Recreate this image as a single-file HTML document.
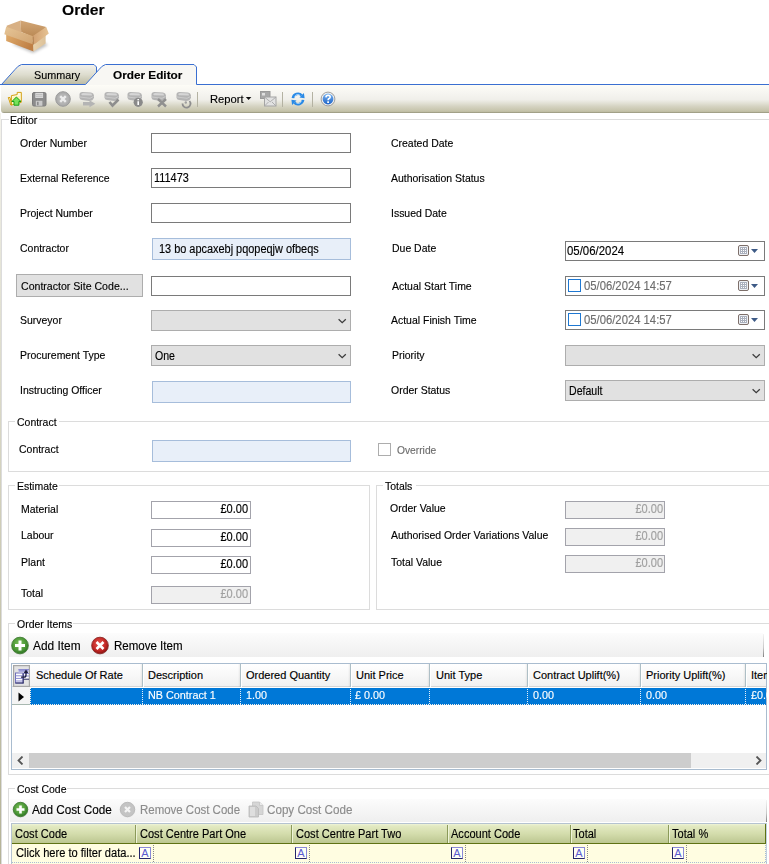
<!DOCTYPE html><html><head><meta charset="utf-8"><style>
html,body{margin:0;padding:0;width:769px;height:864px;overflow:hidden;background:#fff;position:relative}
.t{position:absolute;white-space:nowrap;font-family:'Liberation Sans',sans-serif;font-size:11px;line-height:13px;-webkit-text-stroke:0.15px currentColor}
.b{position:absolute;box-sizing:border-box}
svg{display:block}
</style></head><body>
<svg class="b" style="left:0;top:16px" width="56" height="42" viewBox="0 16 56 42">
<defs>
<linearGradient id="bi" x1="0" y1="0" x2="0" y2="1"><stop offset="0" stop-color="#d2a676"/><stop offset="1" stop-color="#b88752"/></linearGradient>
<linearGradient id="bf" x1="0" y1="0" x2="1" y2="1"><stop offset="0" stop-color="#e6c597"/><stop offset="1" stop-color="#d0a370"/></linearGradient>
<linearGradient id="bp" x1="0" y1="0" x2="1" y2="0.5"><stop offset="0" stop-color="#e0ac6c"/><stop offset="1" stop-color="#bf7f45"/></linearGradient>
<linearGradient id="br" x1="0" y1="0" x2="1" y2="0"><stop offset="0" stop-color="#e9d2ac"/><stop offset="1" stop-color="#dcc199"/></linearGradient>
<linearGradient id="bq" x1="0" y1="0" x2="1" y2="0"><stop offset="0" stop-color="#d2a070"/><stop offset="1" stop-color="#e6c394"/></linearGradient>
<filter id="bl" x="-0.5" y="-0.5" width="2" height="2"><feGaussianBlur stdDeviation="1.6"/></filter>
</defs>
<path d="M12,44 L33,53 L48,45 L40,40 Z" fill="#000" opacity="0.25" filter="url(#bl)"/>
<polygon points="6.6,25.8 20.5,20.6 21.2,32 8,33" fill="#d8b084"/>
<polygon points="20.5,20.6 46.2,27.1 35,38 21.2,32" fill="url(#bi)"/>
<polygon points="6.2,33 33.4,42 33.6,51.5 6.2,41.1" fill="url(#bp)"/>
<polygon points="33,42 45.6,34 45.6,43.4 33.5,51.5" fill="url(#br)"/>
<polygon points="4.3,34.3 6.2,26.8 33.2,36.2 32.6,44.3" fill="url(#bf)"/>
<polygon points="32.8,36 46.2,27.1 48.8,33.6 35.5,43.4 33,44.5" fill="url(#bq)"/><path d="M33.2,36.5 L33.4,44.5" stroke="#a87a4a" stroke-width="0.8"/>
</svg>
<div class="t" style="left:62px;top:3px;font-size:15px;color:#000;font-weight:bold;transform:scaleX(1.04);transform-origin:0 0;">Order</div>
<svg class="b" style="left:0;top:60px" width="769" height="26" viewBox="0 60 769 26">
<defs>
<linearGradient id="tg" x1="0" y1="0" x2="0" y2="1"><stop offset="0" stop-color="#f3f2ed"/><stop offset="0.5" stop-color="#deddcf"/><stop offset="1" stop-color="#bdbba3"/></linearGradient>
</defs>
<path d="M1.5,84.5 L15,69.5 Q18,65.5 21.5,64.5 L94,64.5 L96.5,67 L96.5,73 L85.5,84.5 Z" fill="url(#tg)"/>
<path d="M1.5,84.5 L15,69.5 Q18,65.5 21.5,64.5 L94,64.5 L96.5,67 L96.5,74" fill="none" stroke="#3a6fd1" stroke-width="1"/>
<path d="M85.5,84.5 L99,69.5 Q102,65.5 105.5,64.5 L194,64.5 L196.5,67 L196.5,85 L85.5,85 Z" fill="#f8f7f3"/>
<path d="M85.5,84.5 L99,69.5 Q102,65.5 105.5,64.5 L194,64.5 L196.5,67 L196.5,84.5 L769,84.5" fill="none" stroke="#3a6fd1" stroke-width="1"/>
<path d="M0,84.5 L85.5,84.5" fill="none" stroke="#3a6fd1" stroke-width="1"/>
</svg>
<div class="t" style="left:33.5px;top:69px;font-size:11.5px;color:#000;font-weight:normal;transform:scaleX(0.9388);transform-origin:0 0;">Summary</div>
<div class="t" style="left:113px;top:69px;font-size:11px;color:#000;font-weight:bold;transform:scaleX(1.07);transform-origin:0 0;">Order Editor</div>
<div class="b" style="left:1px;top:85px;width:768px;height:28px;background:linear-gradient(#fdfcf6 0%,#f7f6f2 25%,#f0efea 52%,#e2e1d5 65%,#d5d3c2 76%,#c8c6ae 90%,#bebca2 96%,#8b8a72 100%);border-bottom-left-radius:3px"></div>
<div class="b" style="left:0px;top:113px;width:1px;height:751px;background:linear-gradient(#f4f3ec,#e4e3d6 22%,#cfcdb8 55%,#b5b397);"></div>
<div class="b" style="left:1px;top:119px;width:800px;height:800px;border-left:1px solid #dcdcdc;border-top:1px solid #dcdcdc;"></div>
<div class="b" style="left:9px;top:119px;width:30px;height:1px;background:#fff;"></div>
<div class="t" style="left:10px;top:114px;font-size:11.5px;color:#000;font-weight:normal;transform:scaleX(0.9101);transform-origin:0 0;">Editor</div>
<div class="t" style="left:20px;top:137px;font-size:11.5px;color:#000;font-weight:normal;transform:scaleX(0.9101);transform-origin:0 0;">Order Number</div>
<div class="t" style="left:20px;top:172px;font-size:11.5px;color:#000;font-weight:normal;transform:scaleX(0.9101);transform-origin:0 0;">External Reference</div>
<div class="t" style="left:20px;top:207px;font-size:11.5px;color:#000;font-weight:normal;transform:scaleX(0.9101);transform-origin:0 0;">Project Number</div>
<div class="t" style="left:20px;top:242px;font-size:11.5px;color:#000;font-weight:normal;transform:scaleX(0.9101);transform-origin:0 0;">Contractor</div>
<div class="t" style="left:20px;top:314px;font-size:11.5px;color:#000;font-weight:normal;transform:scaleX(0.9101);transform-origin:0 0;">Surveyor</div>
<div class="t" style="left:20px;top:349px;font-size:11.5px;color:#000;font-weight:normal;transform:scaleX(0.9101);transform-origin:0 0;">Procurement Type</div>
<div class="t" style="left:20px;top:384px;font-size:11.5px;color:#000;font-weight:normal;transform:scaleX(0.9101);transform-origin:0 0;">Instructing Officer</div>
<div class="t" style="left:391px;top:137px;font-size:11.5px;color:#000;font-weight:normal;transform:scaleX(0.9101);transform-origin:0 0;">Created Date</div>
<div class="t" style="left:391px;top:172px;font-size:11.5px;color:#000;font-weight:normal;transform:scaleX(0.9101);transform-origin:0 0;">Authorisation Status</div>
<div class="t" style="left:391px;top:207px;font-size:11.5px;color:#000;font-weight:normal;transform:scaleX(0.9101);transform-origin:0 0;">Issued Date</div>
<div class="t" style="left:392px;top:242px;font-size:11.5px;color:#000;font-weight:normal;transform:scaleX(0.9101);transform-origin:0 0;">Due Date</div>
<div class="t" style="left:392px;top:280px;font-size:11.5px;color:#000;font-weight:normal;transform:scaleX(0.9101);transform-origin:0 0;">Actual Start Time</div>
<div class="t" style="left:391px;top:314px;font-size:11.5px;color:#000;font-weight:normal;transform:scaleX(0.9101);transform-origin:0 0;">Actual Finish Time</div>
<div class="t" style="left:392px;top:349px;font-size:11.5px;color:#000;font-weight:normal;transform:scaleX(0.9101);transform-origin:0 0;">Priority</div>
<div class="t" style="left:391px;top:384px;font-size:11.5px;color:#000;font-weight:normal;transform:scaleX(0.9101);transform-origin:0 0;">Order Status</div>
<div class="b" style="left:151px;top:133px;width:200px;height:20px;background:#fff;border:1px solid #7a7a7a;"></div>
<div class="b" style="left:151px;top:168px;width:200px;height:20px;background:#fff;border:1px solid #7a7a7a;"></div>
<div class="t" style="left:154.3px;top:172px;font-size:12px;color:#000;font-weight:normal;transform:scaleX(0.91);transform-origin:0 0;">111473</div>
<div class="b" style="left:151px;top:203px;width:200px;height:20px;background:#fff;border:1px solid #7a7a7a;"></div>
<div class="b" style="left:152px;top:238px;width:199px;height:22px;background:#e8eff9;border:1px solid #a6bddb;"></div>
<div class="t" style="left:158.5px;top:243px;font-size:12px;color:#000;font-weight:normal;transform:scaleX(0.91);transform-origin:0 0;">13 bo apcaxebj pqopeqjw ofbeqs</div>
<div class="b" style="left:16px;top:274px;width:127px;height:23px;background:#e1e1e1;border:1px solid #adadad;"></div>
<div class="t" style="left:21px;top:280px;font-size:11.5px;color:#000;font-weight:normal;transform:scaleX(0.9197);transform-origin:0 0;">Contractor Site Code...</div>
<div class="b" style="left:151px;top:276px;width:200px;height:20px;background:#fff;border:1px solid #7a7a7a;"></div>
<div class="b" style="left:151px;top:310px;width:200px;height:21px;background:#e1e1e1;border:1px solid #adadad;"></div>
<div class="b" style="left:338px;top:318px;width:9px;height:6px"><svg width="9" height="6" viewBox="0 0 9 6"><path d="M0.6 1.2 L4.2 4.6 L7.8 1.2" fill="none" stroke="#3c3c3c" stroke-width="1.3"/></svg></div>
<div class="b" style="left:151px;top:345px;width:200px;height:21px;background:#e1e1e1;border:1px solid #adadad;"></div>
<div class="b" style="left:338px;top:353px;width:9px;height:6px"><svg width="9" height="6" viewBox="0 0 9 6"><path d="M0.6 1.2 L4.2 4.6 L7.8 1.2" fill="none" stroke="#3c3c3c" stroke-width="1.3"/></svg></div>
<div class="t" style="left:154.5px;top:350px;font-size:12px;color:#000;font-weight:normal;transform:scaleX(0.88);transform-origin:0 0;">One</div>
<div class="b" style="left:152px;top:381px;width:199px;height:22px;background:#e8eff9;border:1px solid #a6bddb;"></div>
<div class="b" style="left:565px;top:241px;width:200px;height:20px;background:#fff;border:1px solid #7a7a7a;"></div>
<div class="b" style="left:738px;top:245px;width:20px;height:12px"><svg width="20" height="12" viewBox="0 0 20 12">
<rect x="0.5" y="0.5" width="10" height="10" rx="1.5" fill="#eef0f4" stroke="#7d6f6a"/>
<rect x="2" y="2" width="7" height="7" fill="#aab0bd"/>
<g fill="#fff"><rect x="3" y="3" width="1" height="1"/><rect x="5" y="3" width="1" height="1"/><rect x="7" y="3" width="1" height="1"/>
<rect x="3" y="5" width="1" height="1"/><rect x="5" y="5" width="1" height="1"/><rect x="7" y="5" width="1" height="1"/>
<rect x="3" y="7" width="1" height="1"/><rect x="5" y="7" width="1" height="1"/><rect x="7" y="7" width="1" height="1"/></g>
<path d="M13 4 L20 4 L16.5 8 Z" fill="#3d5a86"/>
</svg></div>
<div class="t" style="left:567.3px;top:245px;font-size:12px;color:#000;font-weight:normal;transform:scaleX(0.95);transform-origin:0 0;">05/06/2024</div>
<div class="b" style="left:565px;top:276px;width:200px;height:20px;background:#fff;border:1px solid #7a7a7a;"></div>
<div class="b" style="left:738px;top:280px;width:20px;height:12px"><svg width="20" height="12" viewBox="0 0 20 12">
<rect x="0.5" y="0.5" width="10" height="10" rx="1.5" fill="#eef0f4" stroke="#7d6f6a"/>
<rect x="2" y="2" width="7" height="7" fill="#aab0bd"/>
<g fill="#fff"><rect x="3" y="3" width="1" height="1"/><rect x="5" y="3" width="1" height="1"/><rect x="7" y="3" width="1" height="1"/>
<rect x="3" y="5" width="1" height="1"/><rect x="5" y="5" width="1" height="1"/><rect x="7" y="5" width="1" height="1"/>
<rect x="3" y="7" width="1" height="1"/><rect x="5" y="7" width="1" height="1"/><rect x="7" y="7" width="1" height="1"/></g>
<path d="M13 4 L20 4 L16.5 8 Z" fill="#3d5a86"/>
</svg></div>
<div class="b" style="left:568px;top:279px;width:13px;height:13px;background:#fff;border:1px solid #1e78d2;"></div>
<div class="t" style="left:584px;top:280px;font-size:12px;color:#6d6d6d;font-weight:normal;transform:scaleX(0.94);transform-origin:0 0;">05/06/2024 14:57</div>
<div class="b" style="left:565px;top:310px;width:200px;height:20px;background:#fff;border:1px solid #7a7a7a;"></div>
<div class="b" style="left:738px;top:314px;width:20px;height:12px"><svg width="20" height="12" viewBox="0 0 20 12">
<rect x="0.5" y="0.5" width="10" height="10" rx="1.5" fill="#eef0f4" stroke="#7d6f6a"/>
<rect x="2" y="2" width="7" height="7" fill="#aab0bd"/>
<g fill="#fff"><rect x="3" y="3" width="1" height="1"/><rect x="5" y="3" width="1" height="1"/><rect x="7" y="3" width="1" height="1"/>
<rect x="3" y="5" width="1" height="1"/><rect x="5" y="5" width="1" height="1"/><rect x="7" y="5" width="1" height="1"/>
<rect x="3" y="7" width="1" height="1"/><rect x="5" y="7" width="1" height="1"/><rect x="7" y="7" width="1" height="1"/></g>
<path d="M13 4 L20 4 L16.5 8 Z" fill="#3d5a86"/>
</svg></div>
<div class="b" style="left:568px;top:313px;width:13px;height:13px;background:#fff;border:1px solid #1e78d2;"></div>
<div class="t" style="left:584px;top:314px;font-size:12px;color:#6d6d6d;font-weight:normal;transform:scaleX(0.94);transform-origin:0 0;">05/06/2024 14:57</div>
<div class="b" style="left:565px;top:345px;width:200px;height:21px;background:#e1e1e1;border:1px solid #adadad;"></div>
<div class="b" style="left:752px;top:353px;width:9px;height:6px"><svg width="9" height="6" viewBox="0 0 9 6"><path d="M0.6 1.2 L4.2 4.6 L7.8 1.2" fill="none" stroke="#3c3c3c" stroke-width="1.3"/></svg></div>
<div class="b" style="left:565px;top:380px;width:200px;height:21px;background:#e1e1e1;border:1px solid #adadad;"></div>
<div class="b" style="left:752px;top:388px;width:9px;height:6px"><svg width="9" height="6" viewBox="0 0 9 6"><path d="M0.6 1.2 L4.2 4.6 L7.8 1.2" fill="none" stroke="#3c3c3c" stroke-width="1.3"/></svg></div>
<div class="t" style="left:568.5px;top:385px;font-size:12px;color:#000;font-weight:normal;transform:scaleX(0.88);transform-origin:0 0;">Default</div>
<div class="b" style="left:8px;top:421px;width:800px;height:51px;border-left:1px solid #dcdcdc;border-top:1px solid #dcdcdc;border-bottom:1px solid #dcdcdc;"></div>
<div class="b" style="left:15px;top:421px;width:44px;height:1px;background:#fff;"></div>
<div class="t" style="left:17px;top:416px;font-size:11.5px;color:#000;font-weight:normal;transform:scaleX(0.9101);transform-origin:0 0;">Contract</div>
<div class="t" style="left:19px;top:443px;font-size:11.5px;color:#000;font-weight:normal;transform:scaleX(0.9101);transform-origin:0 0;">Contract</div>
<div class="b" style="left:152px;top:440px;width:199px;height:22px;background:#e8eff9;border:1px solid #a6bddb;"></div>
<div class="b" style="left:378px;top:443px;width:13px;height:13px;background:#fff;border:1px solid #adadad;"></div>
<div class="t" style="left:397px;top:444px;font-size:11.5px;color:#6d6d6d;font-weight:normal;transform:scaleX(0.8909);transform-origin:0 0;">Override</div>
<div class="b" style="left:8px;top:485px;width:362px;height:125px;border-left:1px solid #dcdcdc;border-top:1px solid #dcdcdc;border-right:1px solid #dcdcdc;border-bottom:1px solid #dcdcdc;"></div>
<div class="b" style="left:15px;top:485px;width:44px;height:1px;background:#fff;"></div>
<div class="t" style="left:17px;top:480px;font-size:11.5px;color:#000;font-weight:normal;transform:scaleX(0.9101);transform-origin:0 0;">Estimate</div>
<div class="t" style="left:21px;top:503px;font-size:11.5px;color:#000;font-weight:normal;transform:scaleX(0.9101);transform-origin:0 0;">Material</div>
<div class="t" style="left:21px;top:529px;font-size:11.5px;color:#000;font-weight:normal;transform:scaleX(0.9101);transform-origin:0 0;">Labour</div>
<div class="t" style="left:21px;top:556px;font-size:11.5px;color:#000;font-weight:normal;transform:scaleX(0.9101);transform-origin:0 0;">Plant</div>
<div class="t" style="left:21px;top:587px;font-size:11.5px;color:#000;font-weight:normal;transform:scaleX(0.9101);transform-origin:0 0;">Total</div>
<div class="b" style="left:151px;top:501px;width:100px;height:18px;background:#fff;border:1px solid #a3a3ab;"></div>
<div class="t" style="right:521px;top:503px;font-size:12px;color:#000;transform:scaleX(0.92);transform-origin:100% 0;">£0.00</div>
<div class="b" style="left:151px;top:529px;width:100px;height:18px;background:#fff;border:1px solid #a3a3ab;"></div>
<div class="t" style="right:521px;top:531px;font-size:12px;color:#000;transform:scaleX(0.92);transform-origin:100% 0;">£0.00</div>
<div class="b" style="left:151px;top:556px;width:100px;height:18px;background:#fff;border:1px solid #a3a3ab;"></div>
<div class="t" style="right:521px;top:558px;font-size:12px;color:#000;transform:scaleX(0.92);transform-origin:100% 0;">£0.00</div>
<div class="b" style="left:151px;top:586px;width:100px;height:18px;background:#f0f0f0;border:1px solid #a3a3ab;"></div>
<div class="t" style="right:521px;top:588px;font-size:12px;color:#a0a0a0;transform:scaleX(0.92);transform-origin:100% 0;">£0.00</div>
<div class="b" style="left:376px;top:485px;width:500px;height:125px;border-left:1px solid #dcdcdc;border-top:1px solid #dcdcdc;border-bottom:1px solid #dcdcdc;"></div>
<div class="b" style="left:383px;top:485px;width:33px;height:1px;background:#fff;"></div>
<div class="t" style="left:385px;top:480px;font-size:11.5px;color:#000;font-weight:normal;transform:scaleX(0.9101);transform-origin:0 0;">Totals</div>
<div class="t" style="left:390px;top:502px;font-size:11.5px;color:#000;font-weight:normal;transform:scaleX(0.9101);transform-origin:0 0;">Order Value</div>
<div class="t" style="left:391px;top:529px;font-size:11.5px;color:#000;font-weight:normal;transform:scaleX(0.9101);transform-origin:0 0;">Authorised Order Variations Value</div>
<div class="t" style="left:391px;top:556px;font-size:11.5px;color:#000;font-weight:normal;transform:scaleX(0.9101);transform-origin:0 0;">Total Value</div>
<div class="b" style="left:565px;top:501px;width:100px;height:18px;background:#f0f0f0;border:1px solid #a3a3ab;"></div>
<div class="t" style="right:106px;top:503px;font-size:12px;color:#a0a0a0;transform:scaleX(0.92);transform-origin:100% 0;">£0.00</div>
<div class="b" style="left:565px;top:528px;width:100px;height:18px;background:#f0f0f0;border:1px solid #a3a3ab;"></div>
<div class="t" style="right:106px;top:530px;font-size:12px;color:#a0a0a0;transform:scaleX(0.92);transform-origin:100% 0;">£0.00</div>
<div class="b" style="left:565px;top:555px;width:100px;height:18px;background:#f0f0f0;border:1px solid #a3a3ab;"></div>
<div class="t" style="right:106px;top:557px;font-size:12px;color:#a0a0a0;transform:scaleX(0.92);transform-origin:100% 0;">£0.00</div>
<div class="b" style="left:8px;top:623px;width:800px;height:152px;border-left:1px solid #dcdcdc;border-top:1px solid #dcdcdc;border-bottom:1px solid #dcdcdc;"></div>
<div class="b" style="left:15px;top:623px;width:58px;height:1px;background:#fff;"></div>
<div class="t" style="left:17px;top:618px;font-size:11.5px;color:#000;font-weight:normal;transform:scaleX(0.9101);transform-origin:0 0;">Order Items</div>
<div class="b" style="left:9px;top:633px;width:754px;height:24px;background:linear-gradient(#fcfcfc,#efefef);"></div>
<div class="b" style="left:763px;top:634px;width:1px;height:23px;background:linear-gradient(#f4f4f4,#c8c8c8 60%,#808080);"></div>
<svg class="b" style="left:10px;top:636px" width="20" height="20" viewBox="0 0 20 20">
<defs><radialGradient id="gg1" cx="0.45" cy="0.4" r="0.6"><stop offset="0" stop-color="#7cc05a"/><stop offset="0.7" stop-color="#4a9636"/><stop offset="1" stop-color="#2f7424"/></radialGradient></defs><circle cx="10" cy="9.7" r="9" fill="#000" opacity="0.12"/><circle cx="10" cy="9.5" r="8.3" fill="url(#gg1)" stroke="#3a7a2c" stroke-width="0.8"/>
<path d="M10 4.5 V14.5 M5 9.5 H15" stroke="#fff" stroke-width="3"/></svg>
<div class="t" style="left:33px;top:640px;font-size:12px;color:#000;font-weight:normal;transform:scaleX(0.99);transform-origin:0 0;">Add Item</div>
<svg class="b" style="left:90px;top:636px" width="20" height="20" viewBox="0 0 20 20">
<defs><radialGradient id="rg1" cx="0.45" cy="0.4" r="0.6"><stop offset="0" stop-color="#e85a50"/><stop offset="0.7" stop-color="#c02624"/><stop offset="1" stop-color="#8a1412"/></radialGradient></defs><circle cx="10" cy="9.7" r="9" fill="#000" opacity="0.12"/><circle cx="10" cy="9.5" r="8.3" fill="url(#rg1)" stroke="#8a1f1d" stroke-width="0.8"/>
<path d="M6.5 6 L13.5 13 M13.5 6 L6.5 13" stroke="#fff" stroke-width="2.6"/></svg>
<div class="t" style="left:113.5px;top:640px;font-size:12px;color:#000;font-weight:normal;transform:scaleX(0.96);transform-origin:0 0;">Remove Item</div>
<div class="b" style="left:11px;top:663px;width:756px;height:107px;background:#fff;border:1px solid #a9bccf;"></div>
<div class="b" style="left:12px;top:664px;width:754px;height:23px;background:linear-gradient(#ffffff,#f1f1f1);border-bottom:1px solid #d5d5d5"></div>
<svg class="b" style="left:13px;top:665px" width="17" height="22" viewBox="0 0 17 22">
<rect x="0.6" y="0.6" width="15.8" height="20.8" fill="#e3e3e3" stroke="#a6a6a6" stroke-width="1.2"/>
<rect x="5.5" y="4.5" width="10" height="9.5" fill="#fff"/>
<rect x="5.5" y="4" width="10" height="2.8" fill="#9a9ad8"/>
<path d="M5.5,4.5 H16 M10,8.5 H16 M10,11 H16" stroke="#8c8cd0" stroke-width="1"/>
<path d="M10,14.2 H16" stroke="#2a2a62" stroke-width="1"/>
<rect x="2.5" y="8" width="7.5" height="10" fill="#fff" stroke="#6e6eb8" stroke-width="1"/>
<path d="M2.5,10.8 H10 M2.5,13.4 H10 M2.5,16 H10" stroke="#8a8ad0" stroke-width="1"/>
<path d="M2.5,18 H10.5 M10.2,8.5 V18.3" stroke="#2a2a62" stroke-width="1"/>
<path d="M8,12.2 H11 Q13,12.2 13,10 V7" fill="none" stroke="#1e1e40" stroke-width="1.3"/>
<path d="M10.6,8 L13,4.6 L15.4,8 Z" fill="#1e1e40"/>
</svg>
<div class="b" style="left:140px;top:664px;width:2px;height:23px;background:linear-gradient(90deg,rgba(0,0,0,0),rgba(0,0,0,0.07));"></div>
<div class="b" style="left:142px;top:664px;width:1px;height:23px;background:#aebfc6;"></div>
<div class="b" style="left:143px;top:664px;width:1px;height:23px;background:#ffffff;"></div>
<div class="b" style="left:238px;top:664px;width:2px;height:23px;background:linear-gradient(90deg,rgba(0,0,0,0),rgba(0,0,0,0.07));"></div>
<div class="b" style="left:240px;top:664px;width:1px;height:23px;background:#aebfc6;"></div>
<div class="b" style="left:241px;top:664px;width:1px;height:23px;background:#ffffff;"></div>
<div class="b" style="left:348px;top:664px;width:2px;height:23px;background:linear-gradient(90deg,rgba(0,0,0,0),rgba(0,0,0,0.07));"></div>
<div class="b" style="left:350px;top:664px;width:1px;height:23px;background:#aebfc6;"></div>
<div class="b" style="left:351px;top:664px;width:1px;height:23px;background:#ffffff;"></div>
<div class="b" style="left:427px;top:664px;width:2px;height:23px;background:linear-gradient(90deg,rgba(0,0,0,0),rgba(0,0,0,0.07));"></div>
<div class="b" style="left:429px;top:664px;width:1px;height:23px;background:#aebfc6;"></div>
<div class="b" style="left:430px;top:664px;width:1px;height:23px;background:#ffffff;"></div>
<div class="b" style="left:525px;top:664px;width:2px;height:23px;background:linear-gradient(90deg,rgba(0,0,0,0),rgba(0,0,0,0.07));"></div>
<div class="b" style="left:527px;top:664px;width:1px;height:23px;background:#aebfc6;"></div>
<div class="b" style="left:528px;top:664px;width:1px;height:23px;background:#ffffff;"></div>
<div class="b" style="left:638px;top:664px;width:2px;height:23px;background:linear-gradient(90deg,rgba(0,0,0,0),rgba(0,0,0,0.07));"></div>
<div class="b" style="left:640px;top:664px;width:1px;height:23px;background:#aebfc6;"></div>
<div class="b" style="left:641px;top:664px;width:1px;height:23px;background:#ffffff;"></div>
<div class="b" style="left:743px;top:664px;width:2px;height:23px;background:linear-gradient(90deg,rgba(0,0,0,0),rgba(0,0,0,0.07));"></div>
<div class="b" style="left:745px;top:664px;width:1px;height:23px;background:#aebfc6;"></div>
<div class="b" style="left:746px;top:664px;width:1px;height:23px;background:#ffffff;"></div>
<div class="t" style="left:36px;top:669px;font-size:11px;color:#000;font-weight:normal;">Schedule Of Rate</div>
<div class="t" style="left:148px;top:669px;font-size:11px;color:#000;font-weight:normal;">Description</div>
<div class="t" style="left:246px;top:669px;font-size:11px;color:#000;font-weight:normal;">Ordered Quantity</div>
<div class="t" style="left:356px;top:669px;font-size:11px;color:#000;font-weight:normal;">Unit Price</div>
<div class="t" style="left:436px;top:669px;font-size:11px;color:#000;font-weight:normal;">Unit Type</div>
<div class="t" style="left:533px;top:669px;font-size:11px;color:#000;font-weight:normal;">Contract Uplift(%)</div>
<div class="t" style="left:646px;top:669px;font-size:11px;color:#000;font-weight:normal;">Priority Uplift(%)</div>
<div class="t" style="left:751px;top:669px;font-size:11px;color:#000;font-weight:normal;">Item</div>
<div class="b" style="left:12px;top:687px;width:18px;height:17px;background:#f4f4f4;"></div>
<svg class="b" style="left:18px;top:692px" width="7" height="10" viewBox="0 0 7 10"><path d="M0.5 0.5 L6 5 L0.5 9.5 Z" fill="#000"/></svg>
<div class="b" style="left:30px;top:688px;width:736px;height:17px;background:#0078d7;"></div>
<div class="b" style="left:30px;top:704px;width:736px;height:1px;background:repeating-linear-gradient(90deg,#f8f0e8 0 1px,transparent 1px 2px);"></div>
<div class="b" style="left:30px;top:688px;width:1px;height:17px;background:repeating-linear-gradient(#f8f0e8 0 1px,transparent 1px 2px);"></div>
<div class="b" style="left:12px;top:704px;width:18px;height:1px;background:#a8b8b0;"></div>
<div class="b" style="left:142px;top:688px;width:1px;height:16px;background:repeating-linear-gradient(transparent 0 1px,#e8f0f8 1px 2px);"></div>
<div class="b" style="left:240px;top:688px;width:1px;height:16px;background:repeating-linear-gradient(transparent 0 1px,#e8f0f8 1px 2px);"></div>
<div class="b" style="left:350px;top:688px;width:1px;height:16px;background:repeating-linear-gradient(transparent 0 1px,#e8f0f8 1px 2px);"></div>
<div class="b" style="left:429px;top:688px;width:1px;height:16px;background:repeating-linear-gradient(transparent 0 1px,#e8f0f8 1px 2px);"></div>
<div class="b" style="left:527px;top:688px;width:1px;height:16px;background:repeating-linear-gradient(transparent 0 1px,#e8f0f8 1px 2px);"></div>
<div class="b" style="left:640px;top:688px;width:1px;height:16px;background:repeating-linear-gradient(transparent 0 1px,#e8f0f8 1px 2px);"></div>
<div class="b" style="left:745px;top:688px;width:1px;height:16px;background:repeating-linear-gradient(transparent 0 1px,#e8f0f8 1px 2px);"></div>
<div class="t" style="left:148px;top:689px;font-size:11.5px;color:#fff;font-weight:normal;transform:scaleX(0.9388);transform-origin:0 0;">NB Contract 1</div>
<div class="t" style="left:246px;top:689px;font-size:11.5px;color:#fff;font-weight:normal;transform:scaleX(0.9388);transform-origin:0 0;">1.00</div>
<div class="t" style="left:355px;top:689px;font-size:11.5px;color:#fff;font-weight:normal;transform:scaleX(0.9388);transform-origin:0 0;">£ 0.00</div>
<div class="t" style="left:533px;top:689px;font-size:11.5px;color:#fff;font-weight:normal;transform:scaleX(0.9388);transform-origin:0 0;">0.00</div>
<div class="t" style="left:646px;top:689px;font-size:11.5px;color:#fff;font-weight:normal;transform:scaleX(0.9388);transform-origin:0 0;">0.00</div>
<div class="t" style="left:751px;top:689px;font-size:11.5px;color:#fff;font-weight:normal;transform:scaleX(0.9388);transform-origin:0 0;">£0.00</div>
<div class="b" style="left:767px;top:664px;width:2px;height:105px;background:#fff;"></div>
<div class="b" style="left:12px;top:753px;width:754px;height:15px;background:#f0f0f0;"></div>
<div class="b" style="left:29px;top:753px;width:662px;height:15px;background:#cdcdcd;"></div>
<svg class="b" style="left:17px;top:756px" width="7" height="9" viewBox="0 0 7 9"><path d="M5.5 0.5 L1.5 4.5 L5.5 8.5" fill="none" stroke="#555" stroke-width="1.8"/></svg>
<svg class="b" style="left:755px;top:756px" width="7" height="9" viewBox="0 0 7 9"><path d="M1.5 0.5 L5.5 4.5 L1.5 8.5" fill="none" stroke="#555" stroke-width="1.8"/></svg>
<div class="b" style="left:8px;top:788px;width:800px;height:100px;border-left:1px solid #dcdcdc;border-top:1px solid #dcdcdc;"></div>
<div class="b" style="left:15px;top:788px;width:52px;height:1px;background:#fff;"></div>
<div class="t" style="left:17px;top:783px;font-size:11.5px;color:#000;font-weight:normal;transform:scaleX(0.9101);transform-origin:0 0;">Cost Code</div>
<div class="b" style="left:10px;top:799px;width:756px;height:23px;background:linear-gradient(#fcfcfc,#efefef);"></div>
<div class="b" style="left:766px;top:800px;width:1px;height:22px;background:linear-gradient(#f4f4f4,#c8c8c8 60%,#808080);"></div>
<svg class="b" style="left:12px;top:801px" width="18" height="18" viewBox="0 0 18 18">
<circle cx="8.5" cy="8.7" r="8" fill="#000" opacity="0.12"/><circle cx="8.5" cy="8.5" r="7.2" fill="url(#gg1)" stroke="#3a7a2c" stroke-width="0.8"/>
<path d="M8.5 4.5 V12.5 M4.5 8.5 H12.5" stroke="#fff" stroke-width="2.6"/></svg>
<div class="t" style="left:32px;top:804px;font-size:12px;color:#000;font-weight:normal;transform:scaleX(0.98);transform-origin:0 0;">Add Cost Code</div>
<svg class="b" style="left:119px;top:801px" width="18" height="18" viewBox="0 0 18 18">
<circle cx="8.5" cy="8.7" r="8" fill="#000" opacity="0.06"/><circle cx="8.5" cy="8.5" r="7.2" fill="#c4c4c4" stroke="#b4b4b4" stroke-width="0.8"/>
<path d="M6 6 L11 11 M11 6 L6 11" stroke="#f4f4f4" stroke-width="2.2"/></svg>
<div class="t" style="left:139.5px;top:804px;font-size:12px;color:#8c8c8c;font-weight:normal;transform:scaleX(0.955);transform-origin:0 0;">Remove Cost Code</div>
<svg class="b" style="left:248px;top:801px" width="16" height="18" viewBox="0 0 16 18">
<path d="M4.5,1 H11.5 L15,4.5 V13.5 H4.5 Z" fill="#d6d6d6" stroke="#c4c4c4" stroke-width="0.8"/>
<path d="M11.5,1 V4.5 H15" fill="#ececec" stroke="#c4c4c4" stroke-width="0.8"/>
<path d="M1,5 H8 L10.5,7.5 V16 H1 Z" fill="#cbcbcb" stroke="#b8b8b8" stroke-width="0.8"/>
<path d="M2,6 H7 V15 H2 Z" fill="#dedede"/>
</svg>
<div class="t" style="left:267px;top:804px;font-size:12px;color:#8c8c8c;font-weight:normal;transform:scaleX(0.97);transform-origin:0 0;">Copy Cost Code</div>
<div class="b" style="left:11px;top:823px;width:756px;height:1px;background:#b5c3d0;"></div>
<div class="b" style="left:11px;top:823px;width:1px;height:41px;background:#b5c3d0;"></div>
<div class="b" style="left:12px;top:824px;width:754px;height:20px;background:linear-gradient(#eef3d8 0%,#e3eac2 10%,#d2dbaa 55%,#bcc691 100%);border-bottom:1px solid #5f7214;border-right:1px solid #5f7214"></div>
<div class="b" style="left:766px;top:823px;width:1px;height:41px;background:#c0d0e0;"></div>
<div class="b" style="left:135px;top:825px;width:1px;height:18px;background:#8b9a5a;"></div>
<div class="b" style="left:136px;top:825px;width:1px;height:18px;background:#eef4d8;"></div>
<div class="b" style="left:291px;top:825px;width:1px;height:18px;background:#8b9a5a;"></div>
<div class="b" style="left:292px;top:825px;width:1px;height:18px;background:#eef4d8;"></div>
<div class="b" style="left:447px;top:825px;width:1px;height:18px;background:#8b9a5a;"></div>
<div class="b" style="left:448px;top:825px;width:1px;height:18px;background:#eef4d8;"></div>
<div class="b" style="left:570px;top:825px;width:1px;height:18px;background:#8b9a5a;"></div>
<div class="b" style="left:571px;top:825px;width:1px;height:18px;background:#eef4d8;"></div>
<div class="b" style="left:668px;top:825px;width:1px;height:18px;background:#8b9a5a;"></div>
<div class="b" style="left:669px;top:825px;width:1px;height:18px;background:#eef4d8;"></div>
<div class="t" style="left:15px;top:828px;font-size:12px;color:#000;font-weight:normal;transform:scaleX(0.92);transform-origin:0 0;">Cost Code</div>
<div class="t" style="left:140px;top:828px;font-size:12px;color:#000;font-weight:normal;transform:scaleX(0.92);transform-origin:0 0;">Cost Centre Part One</div>
<div class="t" style="left:296px;top:828px;font-size:12px;color:#000;font-weight:normal;transform:scaleX(0.92);transform-origin:0 0;">Cost Centre Part Two</div>
<div class="t" style="left:451px;top:828px;font-size:12px;color:#000;font-weight:normal;transform:scaleX(0.92);transform-origin:0 0;">Account Code</div>
<div class="t" style="left:573px;top:828px;font-size:12px;color:#000;font-weight:normal;transform:scaleX(0.92);transform-origin:0 0;">Total</div>
<div class="t" style="left:672px;top:828px;font-size:12px;color:#000;font-weight:normal;transform:scaleX(0.92);transform-origin:0 0;">Total %</div>
<div class="b" style="left:12px;top:844px;width:754px;height:20px;background:#fffde1;"></div>
<div class="b" style="left:765px;top:845px;width:1px;height:18px;background:repeating-linear-gradient(#a8bcd4 0 1px,transparent 1px 2px);"></div>
<div class="t" style="left:15.5px;top:847px;font-size:12px;color:#000;font-weight:normal;transform:scaleX(0.925);transform-origin:0 0;">Click here to filter data...</div>
<div class="b" style="left:139px;top:847px;width:12px;height:12px;border:1px solid #8a8ad8;border-left-color:#25256a;border-bottom-color:#25256a;background:#fffff6;font:11px/11px 'Liberation Sans', sans-serif;color:#5a5ad0;text-align:center">A</div>
<div class="b" style="left:153px;top:845px;width:1px;height:18px;background:repeating-linear-gradient(#888 0 1px,transparent 1px 2px);"></div>
<div class="b" style="left:295px;top:847px;width:12px;height:12px;border:1px solid #8a8ad8;border-left-color:#25256a;border-bottom-color:#25256a;background:#fffff6;font:11px/11px 'Liberation Sans', sans-serif;color:#5a5ad0;text-align:center">A</div>
<div class="b" style="left:309px;top:845px;width:1px;height:18px;background:repeating-linear-gradient(#888 0 1px,transparent 1px 2px);"></div>
<div class="b" style="left:451px;top:847px;width:12px;height:12px;border:1px solid #8a8ad8;border-left-color:#25256a;border-bottom-color:#25256a;background:#fffff6;font:11px/11px 'Liberation Sans', sans-serif;color:#5a5ad0;text-align:center">A</div>
<div class="b" style="left:465px;top:845px;width:1px;height:18px;background:repeating-linear-gradient(#888 0 1px,transparent 1px 2px);"></div>
<div class="b" style="left:573px;top:847px;width:12px;height:12px;border:1px solid #8a8ad8;border-left-color:#25256a;border-bottom-color:#25256a;background:#fffff6;font:11px/11px 'Liberation Sans', sans-serif;color:#5a5ad0;text-align:center">A</div>
<div class="b" style="left:587px;top:845px;width:1px;height:18px;background:repeating-linear-gradient(#888 0 1px,transparent 1px 2px);"></div>
<div class="b" style="left:672px;top:847px;width:12px;height:12px;border:1px solid #8a8ad8;border-left-color:#25256a;border-bottom-color:#25256a;background:#fffff6;font:11px/11px 'Liberation Sans', sans-serif;color:#5a5ad0;text-align:center">A</div>
<div class="b" style="left:686px;top:845px;width:1px;height:18px;background:repeating-linear-gradient(#888 0 1px,transparent 1px 2px);"></div>
<div class="b" style="left:12px;top:862px;width:755px;height:1px;background:repeating-linear-gradient(90deg,#a8bcd4 0 1px,transparent 1px 2px);"></div>
<svg class="b" style="left:0;top:85px" width="340" height="28" viewBox="0 85 340 28">
<!-- open folder -->
<path d="M8.3,97.5 H10 L11.8,105 H10.8 Z" fill="#fff6c8" stroke="#d4a012" stroke-width="1"/>
<path d="M11.4,105 V95.6 L17.2,94.6 V92.4 H21.3 V102.3 L19,103 Z" fill="#fffbe2" stroke="#d4a012" stroke-width="1"/>
<path d="M12.5,104 V96.8 L18,96 L20.5,96 V101.5 Z" fill="#fff3b0" opacity="0.8"/>
<path d="M16.4,97 L21,101.5 H18.9 V105.2 H14 V101.5 H11.9 Z" fill="#78e25a" stroke="#1a9e18" stroke-width="1"/>
<!-- save -->
<rect x="32.5" y="92.5" width="13.5" height="13.5" rx="1.5" fill="#8c8c8c" stroke="#7c7c7c" stroke-width="1"/>
<rect x="35.3" y="92.8" width="7.8" height="5.2" fill="#dadada"/>
<path d="M36 94.5 H42.5 M36 96.3 H42.5" stroke="#b8b8b8" stroke-width="0.8"/>
<rect x="35.8" y="100.8" width="6.6" height="5" fill="#cacaca"/>
<rect x="37" y="101.8" width="1.6" height="3.4" fill="#8c8c8c"/>
<!-- cancel -->
<circle cx="63" cy="99" r="7.3" fill="#acacac" stroke="#9a9a9a" stroke-width="1"/>
<circle cx="63" cy="99" r="5.5" fill="#b4b4b4"/>
<path d="M60.2,96.2 L65.8,101.8 M65.8,96.2 L60.2,101.8" stroke="#ececec" stroke-width="2.4"/>
<path d="M79.5,94 Q79.5,92.3 82,92 L91,92.6 Q93.8,93 94,95.5 L94,97.5 Q93,101 89,101 L82,100 Q79.5,99.5 79.5,97.5 Z" fill="#b4b4b4"/>
<path d="M81,94 L83,92.9 L91.5,93.4 L92,95.5 L82,95.2 Z" fill="#d6d6d6"/>
<path d="M80,97 L90,98.3 L93.5,96.5" fill="none" stroke="#cdcdcd" stroke-width="0.9"/>
<path d="M104.5,94 Q104.5,92.3 107,92 L116,92.6 Q118.8,93 119,95.5 L119,97.5 Q118,101 114,101 L107,100 Q104.5,99.5 104.5,97.5 Z" fill="#b4b4b4"/>
<path d="M106,94 L108,92.9 L116.5,93.4 L117,95.5 L107,95.2 Z" fill="#d6d6d6"/>
<path d="M105,97 L115,98.3 L118.5,96.5" fill="none" stroke="#cdcdcd" stroke-width="0.9"/>
<path d="M127.5,94 Q127.5,92.3 130,92 L139,92.6 Q141.8,93 142,95.5 L142,97.5 Q141,101 137,101 L130,100 Q127.5,99.5 127.5,97.5 Z" fill="#b4b4b4"/>
<path d="M129,94 L131,92.9 L139.5,93.4 L140,95.5 L130,95.2 Z" fill="#d6d6d6"/>
<path d="M128,97 L138,98.3 L141.5,96.5" fill="none" stroke="#cdcdcd" stroke-width="0.9"/>
<path d="M151.5,94 Q151.5,92.3 154,92 L163,92.6 Q165.8,93 166,95.5 L166,97.5 Q165,101 161,101 L154,100 Q151.5,99.5 151.5,97.5 Z" fill="#b4b4b4"/>
<path d="M153,94 L155,92.9 L163.5,93.4 L164,95.5 L154,95.2 Z" fill="#d6d6d6"/>
<path d="M152,97 L162,98.3 L165.5,96.5" fill="none" stroke="#cdcdcd" stroke-width="0.9"/>
<path d="M176.5,94 Q176.5,92.3 179,92 L188,92.6 Q190.8,93 191,95.5 L191,97.5 Q190,101 186,101 L179,100 Q176.5,99.5 176.5,97.5 Z" fill="#b4b4b4"/>
<path d="M178,94 L180,92.9 L188.5,93.4 L189,95.5 L179,95.2 Z" fill="#d6d6d6"/>
<path d="M177,97 L187,98.3 L190.5,96.5" fill="none" stroke="#cdcdcd" stroke-width="0.9"/>
<path d="M83,102 H89.5 V100.2 L95.3,103.7 L89.5,107.2 V105.4 H83 Z" fill="#b4b4b4"/>
<path d="M109.5,102 L112.5,105.5 L118.5,99.5" fill="none" stroke="#8e8e8e" stroke-width="2.6"/>
<circle cx="138.2" cy="102.3" r="4.6" fill="#8a8a8a"/><path d="M138.2,101.2 V105" stroke="#fff" stroke-width="1.6"/><rect x="137.4" y="99" width="1.6" height="1.3" fill="#fff"/>
<path d="M158,99 L166,106.5 M166,99 L158,106.5" stroke="#909090" stroke-width="2.4"/>
<path d="M189.5,101 A4 4 0 1 1 182.5,103.5" fill="none" stroke="#8e8e8e" stroke-width="1.8"/>
<circle cx="185.8" cy="102.5" r="1.2" fill="#a0a0a0"/>
<rect x="197" y="92" width="1" height="15" fill="#b4b2a2"/>
<path d="M245.8,97.1 H251.4 L248.6,99.9 Z" fill="#111"/>
<!-- mail -->
<rect x="260.5" y="91.5" width="9.5" height="7" fill="#a8a8a8" stroke="#9a9a9a"/>
<rect x="262" y="93" width="3" height="2.5" fill="#e0e0e0"/>
<rect x="264.5" y="97" width="11.5" height="9" fill="#e2e2e2" stroke="#a4a4a4"/>
<path d="M264.5,97 L270.2,101.8 L276,97 M264.5,106 L268.5,102 M276,106 L272,102" fill="none" stroke="#a8a8a8" stroke-width="0.9"/>
<rect x="282" y="92" width="1" height="15" fill="#b4b2a2"/>
<!-- refresh -->
<defs><linearGradient id="hb" x1="0" y1="0" x2="0" y2="1"><stop offset="0" stop-color="#7ab4f0"/><stop offset="1" stop-color="#1e64c8"/></linearGradient></defs>
<path d="M292.9,98.1 A5.2,5.2 0 0 1 301.7,95.3" fill="none" stroke="#2a8ae6" stroke-width="2.6"/>
<path d="M303.9,93.1 L299.5,97.5 L304.6,98.3 Z" fill="#2a8ae6"/>
<path d="M303.1,99.9 A5.2,5.2 0 0 1 294.3,102.7" fill="none" stroke="#2a8ae6" stroke-width="2.6"/>
<path d="M292.1,104.9 L296.5,100.5 L291.4,99.7 Z" fill="#2a8ae6"/>
<path d="M294.6,96.6 A3.9 3.9 0 0 1 299.5,94.6 M301.4,101.4 A3.9 3.9 0 0 1 296.5,103.4" fill="none" stroke="#b0d8ff" stroke-width="0.8"/>
<rect x="312" y="92" width="1" height="15" fill="#b4b2a2"/>
<!-- help -->
<circle cx="328" cy="99" r="6.9" fill="#f0f0f0" stroke="#8a8a8a" stroke-width="0.8"/>
<circle cx="328" cy="99" r="5.4" fill="url(#hb)"/>
<path d="M325.9,97.4 Q326,95.2 328.1,95.2 Q330.2,95.3 330.2,97 Q330.1,98.2 328.8,98.8 Q328.1,99.2 328.1,100.3" fill="none" stroke="#fff" stroke-width="1.6"/>
<rect x="327.2" y="101.3" width="1.8" height="1.7" fill="#fff"/>
</svg>
<div class="t" style="left:210px;top:92.5px;font-size:11px;color:#000;font-weight:normal;transform:scaleX(1.02);transform-origin:0 0;">Report</div>
</body></html>
